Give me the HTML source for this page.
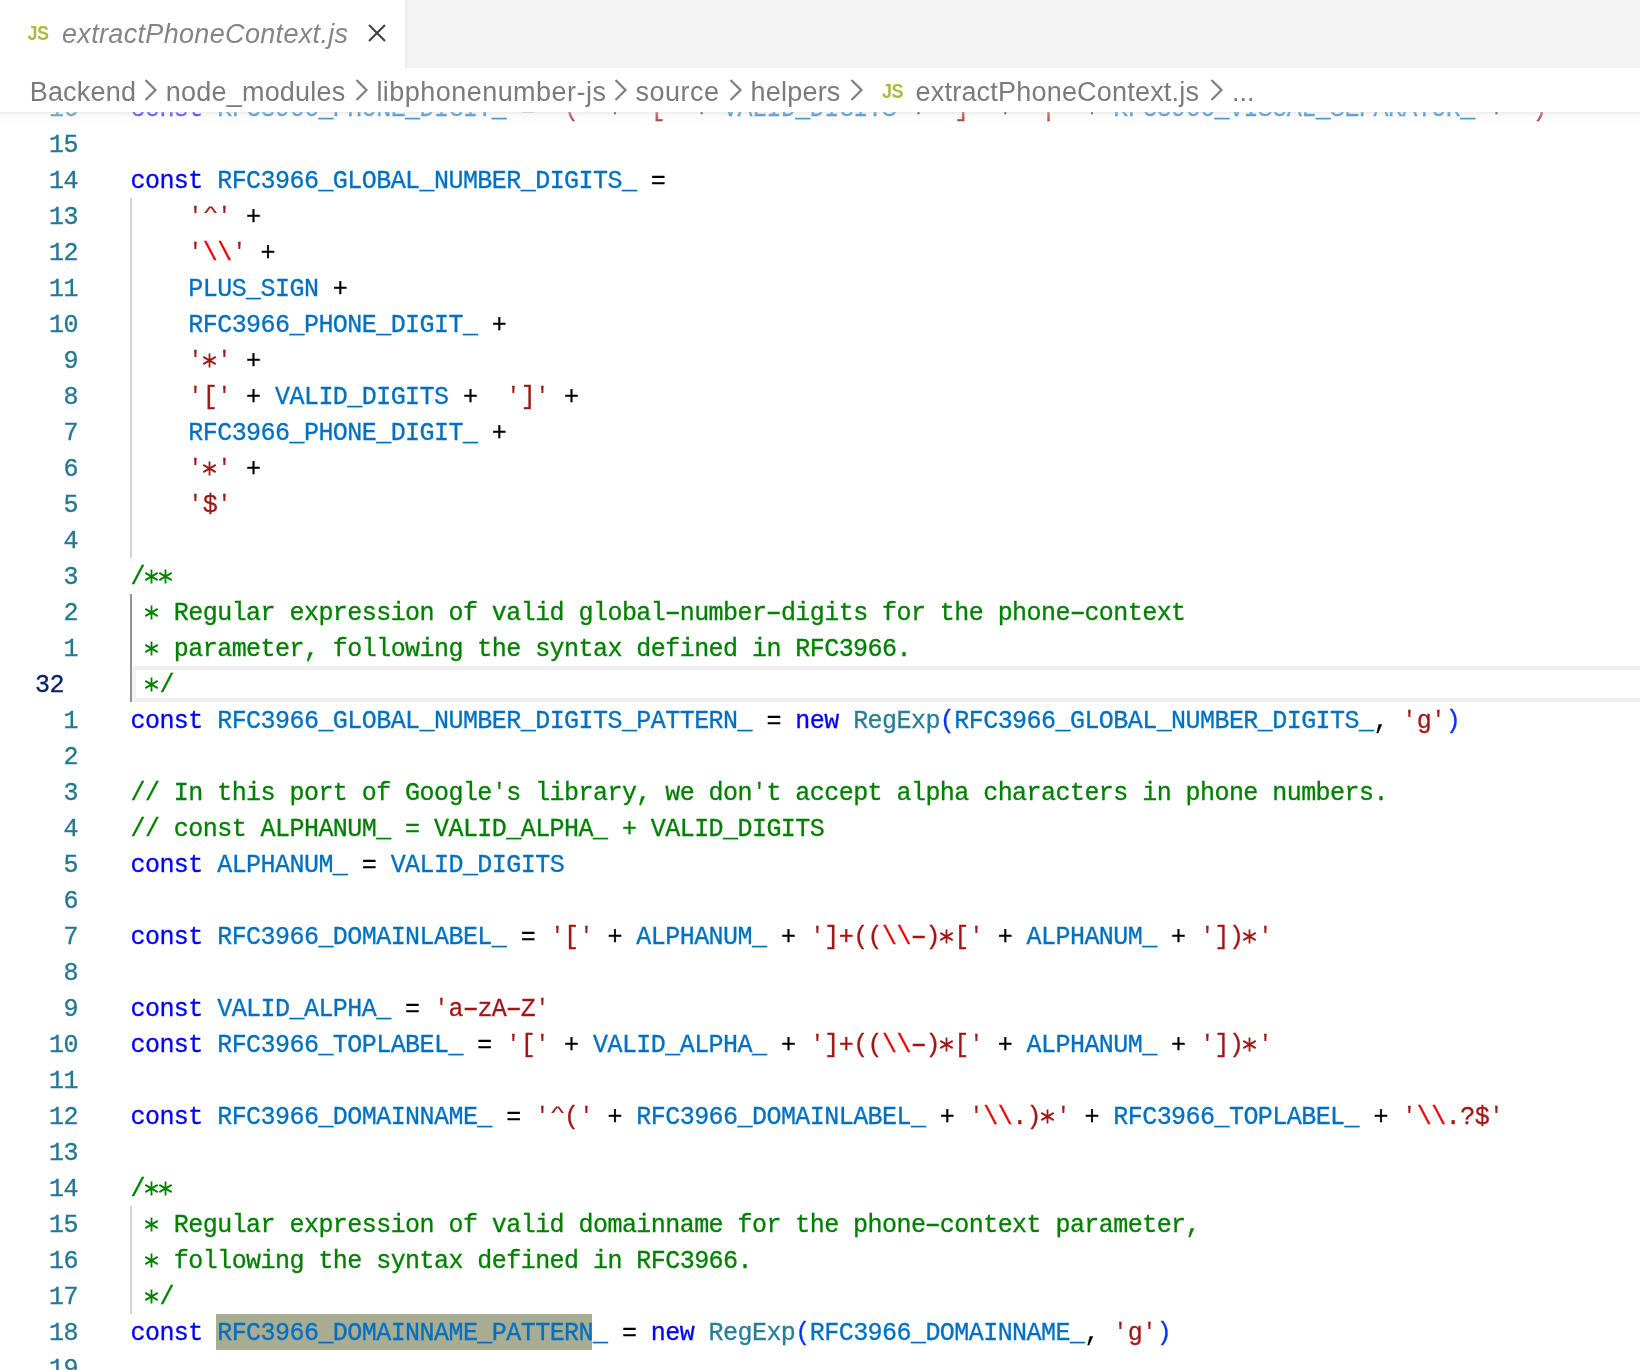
<!DOCTYPE html>
<html><head><meta charset="utf-8">
<style>
html,body{margin:0;padding:0;background:#fff;width:1640px;height:1370px;overflow:hidden;position:relative}
.root{position:absolute;left:0;top:0;width:1640px;height:1370px;will-change:transform}
.editor{position:absolute;left:0;top:0;width:1640px;height:1370px;overflow:hidden}
.row,.ln{position:absolute;height:36px;line-height:36px;white-space:pre;font-family:"Liberation Mono",monospace;font-size:25px;-webkit-text-stroke:0.3px currentColor}
.row{left:130.5px;letter-spacing:-0.55px}
.ln{left:35px;width:43px;text-align:right;color:#237893;letter-spacing:-0.55px}
.ln.cur{text-align:left;color:#0b216f}
.curline{position:absolute;left:132px;right:-10px;top:666px;height:28px;border:4px solid #eeeeee;border-left-color:#f2f2f2;border-radius:2px}
.k{color:#0000ff} .v{color:#0070c1} .c{color:#267f99} .s{color:#a31515} .e{color:#ee0000} .m{color:#008000} .o{color:#000000} .b{color:#0431fa}
.sel{position:absolute;left:216px;top:1314px;width:376px;height:36px;background:#a8ac93}
.ast{position:relative;color:transparent;-webkit-text-stroke:0}
.ast svg{position:absolute;left:-1.2px;top:5.9px}
.car{display:inline-block;transform:translate(0px,-6px) scale(1.05,0.62)}
.hy{display:inline-block;transform:scaleX(1.7)}
.q{display:inline-block;transform:translate(0px,-1px) scale(0.85,0.88)}
.g,.ga{position:absolute;left:130px;width:2px;background:#d3d3d3}
.ga{background:#939393}
.tabs{position:absolute;left:0;top:0;width:1640px;height:68px;background:#f3f3f3}
.tab{position:absolute;left:0;top:0;width:405px;height:68px;background:#fff;border-right:2px solid #ededed}
.jsi{position:absolute;font-family:"Liberation Sans",sans-serif;font-weight:bold;font-size:18px;color:#adba3c;letter-spacing:-0.5px;transform:scaleY(1.13);transform-origin:0 0}
.title{position:absolute;left:62px;top:19px;font-family:"Liberation Sans",sans-serif;font-style:italic;font-size:27px;letter-spacing:0.33px;color:#858585}
.close{position:absolute;left:366px;top:22px}
.crumbs{position:absolute;left:0;top:68px;width:1640px;height:44px;background:#fff;font-family:"Liberation Sans",sans-serif;font-size:27px;color:#7b7b7b;white-space:pre}
.crumbs span.t{position:absolute;top:9px}
.chev{position:absolute;top:11px}
.shad{position:absolute;left:0;top:112px;width:1640px;height:13px;background:linear-gradient(to bottom, rgba(225,225,225,0.6) 0px, rgba(240,240,240,0.4) 3px, rgba(246,246,246,0.25) 8px, rgba(255,255,255,0) 13px)}
</style></head><body><div class="root">
<div class="editor">
<div class="curline"></div><div class="sel"></div>
<div class="g" style="top:198px;height:360px"></div><div class="ga" style="top:594px;height:108px"></div><div class="g" style="top:1206px;height:108px"></div>
<div class="ln" style="top:92px">16</div>
<div class="row" style="top:92px"><span class="k">const</span><span class="o"> </span><span class="v">RFC3966_PHONE_DIGIT_</span><span class="o"> = </span><span class="s"><span class="q">&#x27;</span>(<span class="q">&#x27;</span></span><span class="o"> + </span><span class="s"><span class="q">&#x27;</span>[<span class="q">&#x27;</span></span><span class="o"> + </span><span class="v">VALID_DIGITS</span><span class="o"> + </span><span class="s"><span class="q">&#x27;</span>]<span class="q">&#x27;</span></span><span class="o"> + </span><span class="s"><span class="q">&#x27;</span>|<span class="q">&#x27;</span></span><span class="o"> + </span><span class="v">RFC3966_VISUAL_SEPARATOR_</span><span class="o"> + </span><span class="s"><span class="q">&#x27;</span>)<span class="q">&#x27;</span></span></div>
<div class="ln" style="top:128px">15</div>
<div class="row" style="top:128px"></div>
<div class="ln" style="top:164px">14</div>
<div class="row" style="top:164px"><span class="k">const</span><span class="o"> </span><span class="v">RFC3966_GLOBAL_NUMBER_DIGITS_</span><span class="o"> =</span></div>
<div class="ln" style="top:200px">13</div>
<div class="row" style="top:200px"><span class="o">    </span><span class="s"><span class="q">&#x27;</span><span class="car">^</span><span class="q">&#x27;</span></span><span class="o"> +</span></div>
<div class="ln" style="top:236px">12</div>
<div class="row" style="top:236px"><span class="o">    </span><span class="s"><span class="q">&#x27;</span></span><span class="e">\\</span><span class="s"><span class="q">&#x27;</span></span><span class="o"> +</span></div>
<div class="ln" style="top:272px">11</div>
<div class="row" style="top:272px"><span class="o">    </span><span class="v">PLUS_SIGN</span><span class="o"> +</span></div>
<div class="ln" style="top:308px">10</div>
<div class="row" style="top:308px"><span class="o">    </span><span class="v">RFC3966_PHONE_DIGIT_</span><span class="o"> +</span></div>
<div class="ln" style="top:344px">9</div>
<div class="row" style="top:344px"><span class="o">    </span><span class="s"><span class="q">&#x27;</span><span class="ast">*<svg width="15" height="15" viewBox="0 0 15 15"><path d="M7.5 0.6V14.4M1.3 3.9L13.7 11.1M1.3 11.1L13.7 3.9" stroke="#a31515" stroke-width="1.8" fill="none"/></svg></span><span class="q">&#x27;</span></span><span class="o"> +</span></div>
<div class="ln" style="top:380px">8</div>
<div class="row" style="top:380px"><span class="o">    </span><span class="s"><span class="q">&#x27;</span>[<span class="q">&#x27;</span></span><span class="o"> + </span><span class="v">VALID_DIGITS</span><span class="o"> +  </span><span class="s"><span class="q">&#x27;</span>]<span class="q">&#x27;</span></span><span class="o"> +</span></div>
<div class="ln" style="top:416px">7</div>
<div class="row" style="top:416px"><span class="o">    </span><span class="v">RFC3966_PHONE_DIGIT_</span><span class="o"> +</span></div>
<div class="ln" style="top:452px">6</div>
<div class="row" style="top:452px"><span class="o">    </span><span class="s"><span class="q">&#x27;</span><span class="ast">*<svg width="15" height="15" viewBox="0 0 15 15"><path d="M7.5 0.6V14.4M1.3 3.9L13.7 11.1M1.3 11.1L13.7 3.9" stroke="#a31515" stroke-width="1.8" fill="none"/></svg></span><span class="q">&#x27;</span></span><span class="o"> +</span></div>
<div class="ln" style="top:488px">5</div>
<div class="row" style="top:488px"><span class="o">    </span><span class="s"><span class="q">&#x27;</span>$<span class="q">&#x27;</span></span></div>
<div class="ln" style="top:524px">4</div>
<div class="row" style="top:524px"></div>
<div class="ln" style="top:560px">3</div>
<div class="row" style="top:560px"><span class="m">/<span class="ast">*<svg width="15" height="15" viewBox="0 0 15 15"><path d="M7.5 0.6V14.4M1.3 3.9L13.7 11.1M1.3 11.1L13.7 3.9" stroke="#008000" stroke-width="1.8" fill="none"/></svg></span><span class="ast">*<svg width="15" height="15" viewBox="0 0 15 15"><path d="M7.5 0.6V14.4M1.3 3.9L13.7 11.1M1.3 11.1L13.7 3.9" stroke="#008000" stroke-width="1.8" fill="none"/></svg></span></span></div>
<div class="ln" style="top:596px">2</div>
<div class="row" style="top:596px"><span class="m"> <span class="ast">*<svg width="15" height="15" viewBox="0 0 15 15"><path d="M7.5 0.6V14.4M1.3 3.9L13.7 11.1M1.3 11.1L13.7 3.9" stroke="#008000" stroke-width="1.8" fill="none"/></svg></span> Regular expression of valid global<span class="hy">-</span>number<span class="hy">-</span>digits for the phone<span class="hy">-</span>context</span></div>
<div class="ln" style="top:632px">1</div>
<div class="row" style="top:632px"><span class="m"> <span class="ast">*<svg width="15" height="15" viewBox="0 0 15 15"><path d="M7.5 0.6V14.4M1.3 3.9L13.7 11.1M1.3 11.1L13.7 3.9" stroke="#008000" stroke-width="1.8" fill="none"/></svg></span> parameter, following the syntax defined in RFC3966.</span></div>
<div class="ln cur" style="top:668px">32</div>
<div class="row" style="top:668px"><span class="m"> <span class="ast">*<svg width="15" height="15" viewBox="0 0 15 15"><path d="M7.5 0.6V14.4M1.3 3.9L13.7 11.1M1.3 11.1L13.7 3.9" stroke="#008000" stroke-width="1.8" fill="none"/></svg></span>/</span></div>
<div class="ln" style="top:704px">1</div>
<div class="row" style="top:704px"><span class="k">const</span><span class="o"> </span><span class="v">RFC3966_GLOBAL_NUMBER_DIGITS_PATTERN_</span><span class="o"> = </span><span class="k">new</span><span class="o"> </span><span class="c">RegExp</span><span class="b">(</span><span class="v">RFC3966_GLOBAL_NUMBER_DIGITS_</span><span class="o">, </span><span class="s"><span class="q">&#x27;</span>g<span class="q">&#x27;</span></span><span class="b">)</span></div>
<div class="ln" style="top:740px">2</div>
<div class="row" style="top:740px"></div>
<div class="ln" style="top:776px">3</div>
<div class="row" style="top:776px"><span class="m">// In this port of Google<span class="q">&#x27;</span>s library, we don<span class="q">&#x27;</span>t accept alpha characters in phone numbers.</span></div>
<div class="ln" style="top:812px">4</div>
<div class="row" style="top:812px"><span class="m">// const ALPHANUM_ = VALID_ALPHA_ + VALID_DIGITS</span></div>
<div class="ln" style="top:848px">5</div>
<div class="row" style="top:848px"><span class="k">const</span><span class="o"> </span><span class="v">ALPHANUM_</span><span class="o"> = </span><span class="v">VALID_DIGITS</span></div>
<div class="ln" style="top:884px">6</div>
<div class="row" style="top:884px"></div>
<div class="ln" style="top:920px">7</div>
<div class="row" style="top:920px"><span class="k">const</span><span class="o"> </span><span class="v">RFC3966_DOMAINLABEL_</span><span class="o"> = </span><span class="s"><span class="q">&#x27;</span>[<span class="q">&#x27;</span></span><span class="o"> + </span><span class="v">ALPHANUM_</span><span class="o"> + </span><span class="s"><span class="q">&#x27;</span>]+((</span><span class="e">\\</span><span class="s"><span class="hy">-</span>)<span class="ast">*<svg width="15" height="15" viewBox="0 0 15 15"><path d="M7.5 0.6V14.4M1.3 3.9L13.7 11.1M1.3 11.1L13.7 3.9" stroke="#a31515" stroke-width="1.8" fill="none"/></svg></span>[<span class="q">&#x27;</span></span><span class="o"> + </span><span class="v">ALPHANUM_</span><span class="o"> + </span><span class="s"><span class="q">&#x27;</span>])<span class="ast">*<svg width="15" height="15" viewBox="0 0 15 15"><path d="M7.5 0.6V14.4M1.3 3.9L13.7 11.1M1.3 11.1L13.7 3.9" stroke="#a31515" stroke-width="1.8" fill="none"/></svg></span><span class="q">&#x27;</span></span></div>
<div class="ln" style="top:956px">8</div>
<div class="row" style="top:956px"></div>
<div class="ln" style="top:992px">9</div>
<div class="row" style="top:992px"><span class="k">const</span><span class="o"> </span><span class="v">VALID_ALPHA_</span><span class="o"> = </span><span class="s"><span class="q">&#x27;</span>a<span class="hy">-</span>zA<span class="hy">-</span>Z<span class="q">&#x27;</span></span></div>
<div class="ln" style="top:1028px">10</div>
<div class="row" style="top:1028px"><span class="k">const</span><span class="o"> </span><span class="v">RFC3966_TOPLABEL_</span><span class="o"> = </span><span class="s"><span class="q">&#x27;</span>[<span class="q">&#x27;</span></span><span class="o"> + </span><span class="v">VALID_ALPHA_</span><span class="o"> + </span><span class="s"><span class="q">&#x27;</span>]+((</span><span class="e">\\</span><span class="s"><span class="hy">-</span>)<span class="ast">*<svg width="15" height="15" viewBox="0 0 15 15"><path d="M7.5 0.6V14.4M1.3 3.9L13.7 11.1M1.3 11.1L13.7 3.9" stroke="#a31515" stroke-width="1.8" fill="none"/></svg></span>[<span class="q">&#x27;</span></span><span class="o"> + </span><span class="v">ALPHANUM_</span><span class="o"> + </span><span class="s"><span class="q">&#x27;</span>])<span class="ast">*<svg width="15" height="15" viewBox="0 0 15 15"><path d="M7.5 0.6V14.4M1.3 3.9L13.7 11.1M1.3 11.1L13.7 3.9" stroke="#a31515" stroke-width="1.8" fill="none"/></svg></span><span class="q">&#x27;</span></span></div>
<div class="ln" style="top:1064px">11</div>
<div class="row" style="top:1064px"></div>
<div class="ln" style="top:1100px">12</div>
<div class="row" style="top:1100px"><span class="k">const</span><span class="o"> </span><span class="v">RFC3966_DOMAINNAME_</span><span class="o"> = </span><span class="s"><span class="q">&#x27;</span><span class="car">^</span>(<span class="q">&#x27;</span></span><span class="o"> + </span><span class="v">RFC3966_DOMAINLABEL_</span><span class="o"> + </span><span class="s"><span class="q">&#x27;</span></span><span class="e">\\</span><span class="s">.)<span class="ast">*<svg width="15" height="15" viewBox="0 0 15 15"><path d="M7.5 0.6V14.4M1.3 3.9L13.7 11.1M1.3 11.1L13.7 3.9" stroke="#a31515" stroke-width="1.8" fill="none"/></svg></span><span class="q">&#x27;</span></span><span class="o"> + </span><span class="v">RFC3966_TOPLABEL_</span><span class="o"> + </span><span class="s"><span class="q">&#x27;</span></span><span class="e">\\</span><span class="s">.?$<span class="q">&#x27;</span></span></div>
<div class="ln" style="top:1136px">13</div>
<div class="row" style="top:1136px"></div>
<div class="ln" style="top:1172px">14</div>
<div class="row" style="top:1172px"><span class="m">/<span class="ast">*<svg width="15" height="15" viewBox="0 0 15 15"><path d="M7.5 0.6V14.4M1.3 3.9L13.7 11.1M1.3 11.1L13.7 3.9" stroke="#008000" stroke-width="1.8" fill="none"/></svg></span><span class="ast">*<svg width="15" height="15" viewBox="0 0 15 15"><path d="M7.5 0.6V14.4M1.3 3.9L13.7 11.1M1.3 11.1L13.7 3.9" stroke="#008000" stroke-width="1.8" fill="none"/></svg></span></span></div>
<div class="ln" style="top:1208px">15</div>
<div class="row" style="top:1208px"><span class="m"> <span class="ast">*<svg width="15" height="15" viewBox="0 0 15 15"><path d="M7.5 0.6V14.4M1.3 3.9L13.7 11.1M1.3 11.1L13.7 3.9" stroke="#008000" stroke-width="1.8" fill="none"/></svg></span> Regular expression of valid domainname for the phone<span class="hy">-</span>context parameter,</span></div>
<div class="ln" style="top:1244px">16</div>
<div class="row" style="top:1244px"><span class="m"> <span class="ast">*<svg width="15" height="15" viewBox="0 0 15 15"><path d="M7.5 0.6V14.4M1.3 3.9L13.7 11.1M1.3 11.1L13.7 3.9" stroke="#008000" stroke-width="1.8" fill="none"/></svg></span> following the syntax defined in RFC3966.</span></div>
<div class="ln" style="top:1280px">17</div>
<div class="row" style="top:1280px"><span class="m"> <span class="ast">*<svg width="15" height="15" viewBox="0 0 15 15"><path d="M7.5 0.6V14.4M1.3 3.9L13.7 11.1M1.3 11.1L13.7 3.9" stroke="#008000" stroke-width="1.8" fill="none"/></svg></span>/</span></div>
<div class="ln" style="top:1316px">18</div>
<div class="row" style="top:1316px"><span class="k">const</span><span class="o"> </span><span class="v">RFC3966_DOMAINNAME_PATTERN</span><span class="v">_</span><span class="o"> = </span><span class="k">new</span><span class="o"> </span><span class="c">RegExp</span><span class="b">(</span><span class="v">RFC3966_DOMAINNAME_</span><span class="o">, </span><span class="s"><span class="q">&#x27;</span>g<span class="q">&#x27;</span></span><span class="b">)</span></div>
<div class="ln" style="top:1352px">19</div>
<div class="row" style="top:1352px"></div>
</div>
<div class="tabs"><div class="tab"><span class="jsi" style="left:27.5px;top:22px">JS</span><span class="title">extractPhoneContext.js</span>
<svg class="close" width="22" height="22" viewBox="0 0 22 22"><path d="M3 3 L19 19 M19 3 L3 19" stroke="#424242" stroke-width="2.1" fill="none"/></svg></div></div>
<div class="crumbs"><span class="t" style="left:29.7px;letter-spacing:0.2px">Backend</span><span class="t" style="left:165.8px;letter-spacing:0.21px">node_modules</span><span class="t" style="left:376.4px;letter-spacing:0.46px">libphonenumber-js</span><span class="t" style="left:635.4px;letter-spacing:0.54px">source</span><span class="t" style="left:750.6px;letter-spacing:0.2px">helpers</span><span class="t" style="left:915.6px;letter-spacing:0.2px">extractPhoneContext.js</span><svg class="chev" style="left:144.4px" width="14" height="22" viewBox="0 0 14 22"><path d="M1.5 1 L11.5 11 L1.5 21" fill="none" stroke="#7f7f7f" stroke-width="2.2"/></svg><svg class="chev" style="left:355px" width="14" height="22" viewBox="0 0 14 22"><path d="M1.5 1 L11.5 11 L1.5 21" fill="none" stroke="#7f7f7f" stroke-width="2.2"/></svg><svg class="chev" style="left:614.3px" width="14" height="22" viewBox="0 0 14 22"><path d="M1.5 1 L11.5 11 L1.5 21" fill="none" stroke="#7f7f7f" stroke-width="2.2"/></svg><svg class="chev" style="left:728.7px" width="14" height="22" viewBox="0 0 14 22"><path d="M1.5 1 L11.5 11 L1.5 21" fill="none" stroke="#7f7f7f" stroke-width="2.2"/></svg><svg class="chev" style="left:850.4px" width="14" height="22" viewBox="0 0 14 22"><path d="M1.5 1 L11.5 11 L1.5 21" fill="none" stroke="#7f7f7f" stroke-width="2.2"/></svg><svg class="chev" style="left:1209.6px" width="14" height="22" viewBox="0 0 14 22"><path d="M1.5 1 L11.5 11 L1.5 21" fill="none" stroke="#7f7f7f" stroke-width="2.2"/></svg><span class="jsi" style="left:882px;top:12px">JS</span><span class="t" style="left:1232px">...</span></div><div class="shad"></div>
</div></body></html>
